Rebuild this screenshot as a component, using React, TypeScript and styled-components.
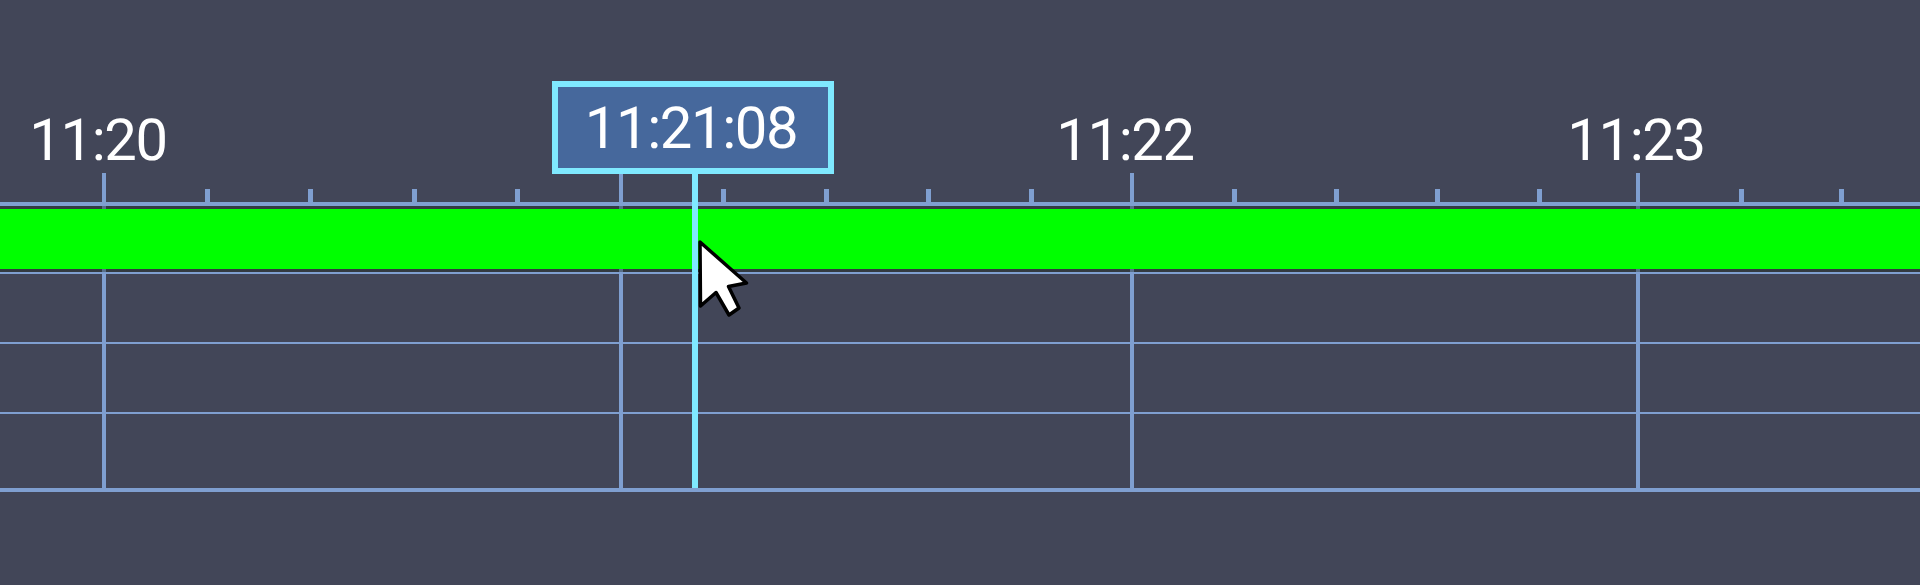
import React from "react";
import styled, { createGlobalStyle } from "styled-components";

const LINE = "#7f9fd0";
const CURSOR = "#7fe9ff";
const BG = "#424658";

const Global = createGlobalStyle`
  html, body { margin: 0; padding: 0; background: ${BG}; }
`;

const Page = styled.div`
  position: relative;
  width: 1920px;
  height: 585px;
  overflow: hidden;
  padding-top: 202px;
  box-sizing: border-box;
  background: ${BG};
  font-family: Roboto, "Liberation Sans", sans-serif;
  text-rendering: geometricPrecision;
`;

const Axis = styled.div`
  height: 4px;
  background: ${LINE};
`;

const Band = styled.div`
  position: relative;
  z-index: 1;
  height: 60px;
  margin: 3px 0;
  background: #00ff00;
  box-shadow: 0 -3px 0 rgba(30, 40, 30, 0.4), 0 3px 0 rgba(30, 40, 30, 0.4);
`;

const Row = styled.div<{ $h: number }>`
  box-sizing: border-box;
  height: ${(p) => p.$h}px;
  border-top: 2px solid ${LINE};
`;

const Baseline = styled.div`
  height: 4px;
  background: ${LINE};
`;

/* Overlay holding one column per minute, under the band */
const Minutes = styled.div`
  position: absolute;
  left: 0;
  top: 0;
  display: flex;
  height: 488px;
  padding-left: 102px;
`;

const Minute = styled.div<{ $w: number }>`
  flex: 0 0 ${(p) => p.$w}px;
  display: flex;
  flex-direction: column;
`;

const LabelSlot = styled.div<{ $dx: number }>`
  flex: 0 0 173px;
  box-sizing: border-box;
  width: 4px;
  padding-top: 109px;
  margin-left: ${(p) => p.$dx}px;
  display: flex;
  justify-content: center;
`;

const TimeLabel = styled.span`
  font-size: 58px;
  letter-spacing: -1.4px;
  line-height: 64px;
  color: #ffffff;
  white-space: nowrap;
`;

const Ruler = styled.div<{ $gap: number; $lead: number }>`
  flex: 1;
  display: flex;
  align-items: flex-start;
  gap: ${(p) => p.$gap}px;
  padding: 16px 0 0 ${(p) => p.$lead}px;
  border-left: 4px solid ${LINE};
`;

const MinorTick = styled.i`
  flex: 0 0 5px;
  height: 13px;
  background: ${LINE};
`;

const Cursor = styled.div`
  position: absolute;
  z-index: 2;
  left: 552px;
  top: 81px;
  width: 282px;
  display: flex;
  flex-direction: column;
  align-items: center;
`;

const CursorBox = styled.div`
  box-sizing: border-box;
  width: 100%;
  height: 93px;
  display: flex;
  align-items: center;
  justify-content: center;
  padding: 3px 4px 0 0;
  border: 6px solid ${CURSOR};
  background: #46689c;
  color: #ffffff;
  font-size: 58px;
  letter-spacing: -1.4px;
  line-height: 66px;
  white-space: nowrap;
`;

const CursorLine = styled.div`
  width: 6px;
  height: 314px;
  margin-left: 4px;
  background: ${CURSOR};
`;

const Pointer = styled.svg`
  position: absolute;
  z-index: 3;
  left: 690px;
  top: 232px;
`;

const minutes = [
  { w: 517, label: "11:20", dx: -6, lead: 99, gap: 98.3, ticks: 4 },
  { w: 511, label: "", dx: 0, lead: 98, gap: 97.7, ticks: 4 },
  { w: 506, label: "11:22", dx: -7, lead: 98, gap: 96.7, ticks: 4 },
  { w: 400, label: "11:23", dx: -2, lead: 99, gap: 95, ticks: 2 },
];

export default function App() {
  return (
    <Page>
      <Global />
      <Axis />
      <Band />
      <Row $h={70} />
      <Row $h={70} />
      <Row $h={76} />
      <Baseline />
      <Minutes>
        {minutes.map((m, i) => (
          <Minute key={i} $w={m.w}>
            <LabelSlot $dx={m.dx}>{m.label && <TimeLabel>{m.label}</TimeLabel>}</LabelSlot>
            <Ruler $gap={m.gap} $lead={m.lead}>
              {Array.from({ length: m.ticks }, (_, k) => (
                <MinorTick key={k} />
              ))}
            </Ruler>
          </Minute>
        ))}
      </Minutes>
      <Cursor>
        <CursorBox>11:21:08</CursorBox>
        <CursorLine />
      </Cursor>
      <Pointer width="70" height="92" viewBox="690 232 70 92">
        <path
          d="M700 242 L746.5 283 L728.5 286.5 L739 308 L729 315 L716 292.5 L700.5 306 Z"
          fill="#ffffff"
          stroke="#000000"
          strokeWidth="3.5"
          strokeLinejoin="round"
        />
      </Pointer>
    </Page>
  );
}
